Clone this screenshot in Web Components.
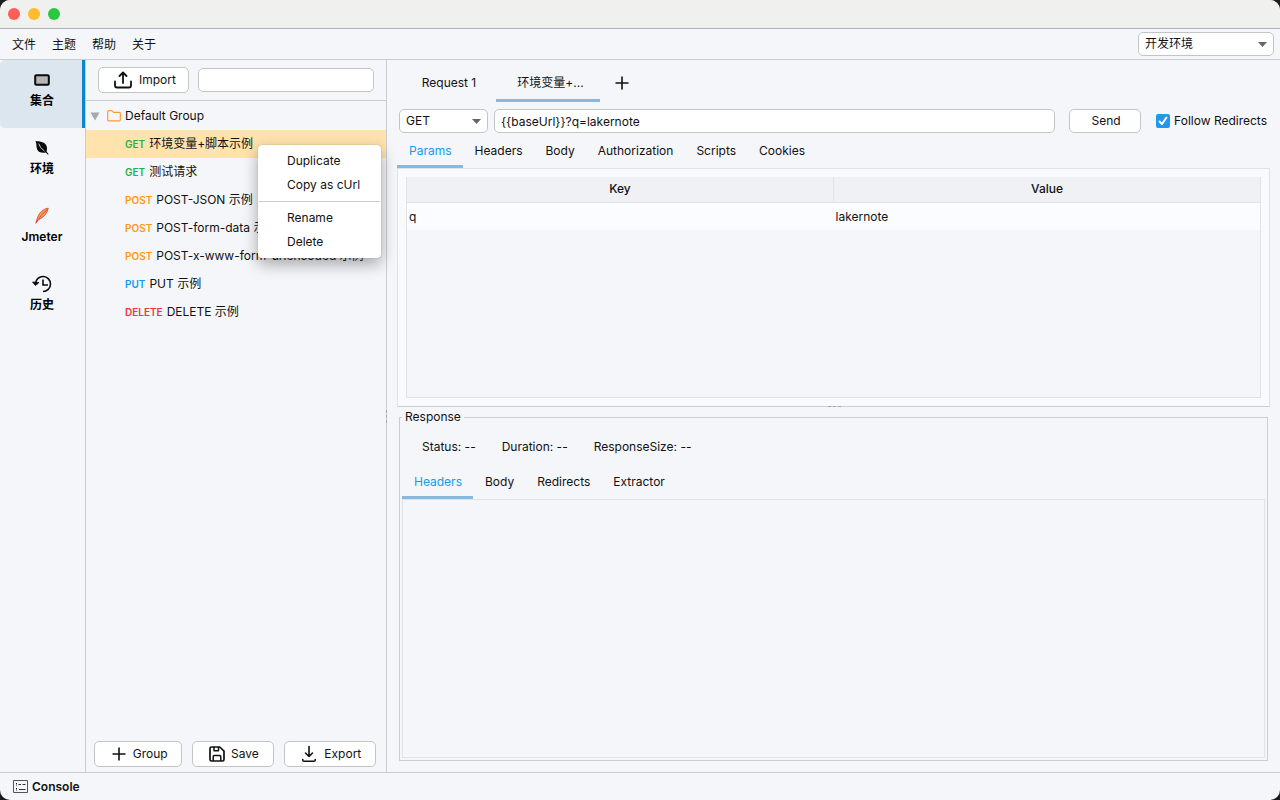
<!DOCTYPE html>
<html lang="zh-CN">
<head>
<meta charset="utf-8">
<title>API Client</title>
<style>
  :root {
    --bg: #f5f6fa;
    --line: #cccdd0;
    --control: #c4c4c4;
    --pane: #e0e2e8;
    --accent: #129bf4;
    --underline: #87b9e0;
  }

  html {
    background: #1c1c20;
  }

  body {
    margin: 0;
    color: #111;
    font: 12px/16px Inter, "Noto Sans CJK SC", sans-serif;
  }
</style>
</head>
<body>
<app-window></app-window>

<script>
const icons = {
  import: '<svg width="20" height="20" viewBox="0 0 20 20" fill="none" stroke="#111" stroke-width="1.8" stroke-linecap="round" stroke-linejoin="round"><path d="M10 13V3M6.500 6 10 2.500 13.500 6M2 11.500v4q0 2 2 2h12q2 0 2-2v-4"/></svg>',
  export: '<svg width="18" height="18" viewBox="0 0 18 18" fill="none" stroke="#111" stroke-width="1.600" stroke-linecap="round" stroke-linejoin="round"><path d="M9 1.500v10M5.500 8 9 11.500 12.500 8M2.800 14.500v.5q0 1.300 1.300 1.300h9.800q1.300 0 1.300-1.300v-.5"/></svg>',
  plus: '<svg width="16" height="16" viewBox="0 0 16 16" stroke="#111" stroke-width="1.600"><path d="M8 1.500v13M1.500 8h13"/></svg>',
  save: '<svg width="16" height="16" viewBox="0 0 16 16" fill="none" stroke="#111" stroke-width="1.700" stroke-linejoin="round"><path d="M2.500 1h8.300L15 5.200v8.300q0 1.500-1.500 1.500h-11Q1 15 1 13.500v-11Q1 1 2.500 1Z"/><path d="M5 1v3.700h4.500V1M4.200 15v-4.300q0-1.200 1.200-1.200h5.200q1.200 0 1.200 1.200V15" stroke-width="1.500"/></svg>',
  console: '<svg width="15" height="13" viewBox="0 0 15 13" fill="none" stroke="#555"><path d="M.5.5h14v12H.5Z"/><path d="M3.500 3v2.500M3.500 8v2.500" stroke="#111" stroke-dasharray="1 .6"/><path d="M5.500 4.500h2.500M9.500 4.500h3M6 9.500h6.500" stroke="#333"/></svg>',
  collection: '<svg width="16" height="12" viewBox="0 0 16 12"><rect x="1.200" y="1.200" width="13.600" height="9.600" rx="1" fill="#b4b4b4" stroke="#0a0a0a" stroke-width="2"/></svg>',
  leaf: '<svg width="16" height="16" viewBox="0 0 16 16"><path fill="#0a0a0a" d="M1.500 1C6 1.300 11.500 1.800 12.800 6.800c.4 2 .1 3.600-.2 4.700l2 2.800-.6.500-2.200-2.400c-3.600 1-7.300.1-8.600-2.900C1.900 6.500 3 4 1.500 1Z"/><path d="M4.800 3.600q.8 4.400 5.700 7.400" fill="none" stroke="#f5f6fa" stroke-width=".8"/></svg>',
  feather: '<svg width="16" height="18" viewBox="0 0 16 18"><path d="M14.300 1.200C9.500 1.800 5.500 5.200 3.600 10.300L1.800 16.300 4.600 12.600C9.500 10.600 13 6.500 14.300 1.200Z" fill="#f9a04a" stroke="#e2453c" stroke-width=".9"/><path d="M13.500 2.300Q7 7.500 2.300 15" fill="none" stroke="#d8345a" stroke-width=".8"/></svg>',
  history: '<svg width="20" height="18" viewBox="0 0 20 18" fill="none" stroke="#0a0a0a" stroke-width="1.600"><path d="M3.500 8.500A7.500 7.500 0 1 1 11 16.500M11 4.500V10h5"/><path d="m.5 7 3 3.500L7 7.500Z" fill="#0a0a0a" stroke-width=".8" stroke-linejoin="round"/></svg>',
  folder: '<svg width="14" height="12" viewBox="0 0 14 12" fill="none" stroke="#ff9a2e" stroke-width="1.200" stroke-linejoin="round"><path d="M.7 9.800V1.700q0-1 1-1H5l1.500 1.600h5.800q1 0 1 1v6.500q0 1-1 1H1.700q-1 0-1-1Z"/></svg>',
  caret: '<svg width="10" height="9" viewBox="0 0 10 9"><path fill="#a8a8a8" d="M.5.5h9L5 8.500Z"/></svg>',
  arrow: '<svg width="9" height="5" viewBox="0 0 9 5"><path fill="#666" d="M0 0h9L4.500 5Z"/></svg>',
  check: '<svg width="14" height="14" viewBox="0 0 14 14" fill="none" stroke="#fff" stroke-width="2" stroke-linecap="round" stroke-linejoin="round"><path d="m3.500 7.500 2.500 2.500 4.500-6.500"/></svg>',
}

class UiElement extends HTMLElement {
  constructor() {
    super()

    this.attachShadow({ mode: 'open' })
  }

  connectedCallback() {
    this.shadowRoot.innerHTML = this.template()
  }
}

class UiIcon extends UiElement {
  template() {
    return `
      <style>
        :host { display: inline-flex; flex: none; }
      </style>
      ${icons[this.getAttribute('name')]}
    `
  }
}

class UiButton extends UiElement {
  template() {
    return `
      <style>
        :host { display: flex; }

        button {
          flex: 1;
          display: flex;
          align-items: center;
          justify-content: center;
          gap: 6px;
          padding: 0 10px 0 12px;
          border: 1px solid var(--control);
          border-radius: 5px;
          background: #fff;
          color: inherit;
          font: inherit;
        }
      </style>

      <button type="button"><slot></slot></button>
    `
  }
}

class UiSelect extends UiElement {
  template() {
    const value = this.getAttribute('value')

    return `
      <style>
        :host { display: grid; height: 24px; }

        select, ui-icon { grid-area: 1 / 1; }

        select {
          appearance: none;
          box-sizing: border-box;
          width: 100%;
          padding: 0 6px;
          border: 1px solid var(--control);
          border-radius: 5px;
          background: #fff;
          color: inherit;
          font: inherit;
        }

        ui-icon {
          place-self: center end;
          margin-right: 7px;
          pointer-events: none;
        }
      </style>

      <select aria-label="${this.getAttribute('label')}">
        <option>${value}</option>
      </select>
      <ui-icon name="arrow"></ui-icon>
    `
  }
}

class UiInput extends UiElement {
  template() {
    return `
      <style>
        :host { display: block; height: 24px; }

        input {
          box-sizing: border-box;
          width: 100%;
          height: 100%;
          padding: 0 6px;
          border: 1px solid var(--control);
          border-radius: 5px;
          background: #fff;
          color: inherit;
          font: inherit;
        }
      </style>

      <input type="text" aria-label="${this.getAttribute('label')}" value="${this.getAttribute('value') || ''}">
    `
  }
}

class UiCheckbox extends UiElement {
  template() {
    return `
      <style>
        :host { display: block; }

        label { display: flex; align-items: center; gap: 4px; }
        span { display: grid; }
        input, ui-icon { grid-area: 1 / 1; }

        input {
          appearance: none;
          width: 14px;
          height: 14px;
          margin: 0;
          border-radius: 2px;
          background: #2496ec;
        }

        input:not(:checked) + ui-icon { visibility: hidden; }
        ui-icon { pointer-events: none; }
      </style>

      <label>
        <span><input type="checkbox" checked><ui-icon name="check"></ui-icon></span>
        <slot></slot>
      </label>
    `
  }
}

class UiTab extends UiElement {
  template() {
    return `
      <style>
        :host { display: flex; }

        button {
          flex: 1;
          height: 34px;
          padding: 3px 11px 0 12px;
          border: 0;
          border-bottom: 3px solid transparent;
          background: none;
          color: inherit;
          font: inherit;
          white-space: nowrap;
        }

        :host([large]) button { height: 38px; padding-left: 16px; }
        :host([selected]) button { border-color: var(--underline); }
        :host([selected]:not([large])) button { color: var(--accent); }
      </style>

      <button type="button" role="tab" aria-selected="${this.hasAttribute('selected')}"><slot></slot></button>
    `
  }
}

class TitleBar extends UiElement {
  template() {
    return `
      <style>
        :host {
          display: flex;
          align-items: center;
          gap: 8px;
          height: 28px;
          padding-left: 8px;
          border-bottom: 1px solid #b3b3b5;
          background: #f0f0ee;
        }

        button {
          width: 12px;
          height: 12px;
          padding: 0;
          border: 0;
          border-radius: 50%;
        }

        .close { background: #fe5f57; }
        .minimize { background: #febb2e; }
        .zoom { background: #28c840; }
      </style>

      <button class="close" aria-label="Close"></button>
      <button class="minimize" aria-label="Minimize"></button>
      <button class="zoom" aria-label="Zoom"></button>
    `
  }
}

class MenuBar extends UiElement {
  template() {
    return `
      <style>
        :host {
          display: flex;
          align-items: center;
          gap: 16px;
          height: 30px;
          padding: 0 6px 0 12px;
          border-bottom: 1px solid var(--line);
        }

        button {
          padding: 2px 0 0;
          border: 0;
          background: none;
          color: inherit;
          font: inherit;
        }

        ui-select { width: 136px; margin-left: auto; }
      </style>

      <button>文件</button>
      <button>主题</button>
      <button>帮助</button>
      <button>关于</button>
      <ui-select label="环境" value="开发环境"></ui-select>
    `
  }
}

class NavItem extends UiElement {
  template() {
    return `
      <style>
        :host { display: block; }

        button {
          display: flex;
          flex-direction: column;
          align-items: center;
          gap: 3px;
          box-sizing: border-box;
          width: 100%;
          height: 68px;
          padding: 10px 0 9px 2px;
          border: 0;
          border-right: 3px solid transparent;
          border-radius: 5px 0 0 5px;
          background: none;
          color: #000;
          font: inherit;
          font-weight: 600;
        }

        .icon { display: grid; place-items: center; height: 20px; }

        :host([selected]) button {
          border-color: #0c85cc;
          background: #dbe6ee;
        }
      </style>

      <button type="button">
        <span class="icon"><ui-icon name="${this.getAttribute('icon')}"></ui-icon></span>
        <slot></slot>
      </button>
    `
  }
}

class TreeRow extends UiElement {
  template() {
    const method = this.getAttribute('method')

    return `
      <style>
        :host {
          display: flex;
          align-items: center;
          gap: 4px;
          height: 28px;
          padding-left: 39px;
          white-space: nowrap;
        }

        :host([selected]) { background: #ffe3ac; }

        b { font-size: 10px; font-weight: 600; }
        .get { color: #1fb14c; }
        .post { color: #ff9811; }
        .put { color: #129bf4; }
        .delete { color: #f53535; }
      </style>

      <b class="${method.toLowerCase()}">${method}</b>
      <span><slot></slot></span>
    `
  }
}

class ContextMenu extends UiElement {
  template() {
    return `
      <style>
        :host {
          display: block;
          box-sizing: border-box;
          padding: 4px 0;
          border-radius: 4px;
          background: #fff;
          box-shadow: 0 0 1px #0006, 0 6px 16px #0005;
        }

        button {
          display: block;
          width: 100%;
          height: 24px;
          padding: 0 29px;
          border: 0;
          background: none;
          color: inherit;
          font: inherit;
          text-align: left;
          white-space: nowrap;
        }

        hr {
          margin: 4px 1px;
          border: 0;
          border-top: 1px solid #ccc;
        }
      </style>

      <div role="menu">
        <button role="menuitem">Duplicate</button>
        <button role="menuitem">Copy as cUrl</button>
        <hr>
        <button role="menuitem">Rename</button>
        <button role="menuitem">Delete</button>
      </div>
    `
  }
}

// Grip dots drawn over the divider between two panels
class SplitGrip extends UiElement {
  template() {
    return `
      <style>
        :host {
          display: flex;
          gap: 2px;
        }

        :host([vertical]) { flex-direction: column; }

        i {
          width: 3px;
          height: 1px;
          background: #a4a6aa;
        }

        :host([vertical]) i {
          width: 1px;
          height: 3px;
        }
      </style>

      <i></i><i></i><i></i>
    `
  }
}

class CollectionPanel extends UiElement {
  template() {
    return `
      <style>
        :host {
          position: relative;
          display: flex;
          flex-direction: column;
          box-sizing: border-box;
          border-right: 1px solid var(--line);
        }

        .toolbar {
          display: flex;
          align-items: center;
          gap: 9px;
          height: 40px;
          padding: 0 12px;
          border-bottom: 1px solid var(--line);
        }

        .toolbar ui-button { width: 91px; height: 26px; }
        .toolbar ui-input { flex: 1; }

        .tree { flex: 1; padding-top: 1px; }

        .group {
          display: flex;
          align-items: center;
          height: 28px;
          padding-left: 4px;
        }

        .group ui-icon + ui-icon { margin: 0 4px 0 7px; }

        .actions {
          display: flex;
          gap: 10px;
          height: 26px;
          padding: 0 10px 5px 8px;
        }

        .actions ui-button { flex: 1 1 auto; }

        context-menu {
          position: absolute;
          left: 172px;
          top: 85px;
          z-index: 1;
          width: 123px;
        }

        split-grip {
          position: absolute;
          right: -1px;
          top: calc(50% - 6px);
        }
      </style>

      <div class="toolbar">
        <ui-button><ui-icon name="import"></ui-icon>Import</ui-button>
        <ui-input label="Search"></ui-input>
      </div>
      <div class="tree">
        <div class="group">
          <ui-icon name="caret"></ui-icon>
          <ui-icon name="folder"></ui-icon>
          <span>Default Group</span>
        </div>
        <tree-row method="GET" selected>环境变量+脚本示例</tree-row>
        <tree-row method="GET">测试请求</tree-row>
        <tree-row method="POST">POST-JSON 示例</tree-row>
        <tree-row method="POST">POST-form-data 示例</tree-row>
        <tree-row method="POST">POST-x-www-form-urlencoded 示例</tree-row>
        <tree-row method="PUT">PUT 示例</tree-row>
        <tree-row method="DELETE">DELETE 示例</tree-row>
      </div>
      <div class="actions">
        <ui-button><ui-icon name="plus"></ui-icon>Group</ui-button>
        <ui-button><ui-icon name="save"></ui-icon>Save</ui-button>
        <ui-button><ui-icon name="export"></ui-icon>Export</ui-button>
      </div>
      <context-menu></context-menu>
      <split-grip vertical></split-grip>
    `
  }
}

class ParamsTable extends UiElement {
  template() {
    return `
      <style>
        :host {
          display: block;
          box-sizing: border-box;
          border: 1px solid var(--pane);
          border-top: 0;
          background: var(--bg);
        }

        table {
          width: 100%;
          border-collapse: collapse;
          table-layout: fixed;
        }

        th {
          height: 24px;
          padding: 0 0 1px;
          border-bottom: 1px solid var(--pane);
          background: #f0f1f5;
          font-weight: 500;
        }

        th + th { border-left: 1px solid #e2e3e7; }

        td {
          height: 27px;
          padding: 0 2px;
          background: #fbfcff;
        }
      </style>

      <table>
        <thead><tr><th>Key</th><th>Value</th></tr></thead>
        <tbody><tr><td>q</td><td>lakernote</td></tr></tbody>
      </table>
    `
  }
}

class RequestEditor extends UiElement {
  template() {
    return `
      <style>
        :host {
          position: relative;
          display: flex;
          flex-direction: column;
        }

        .url {
          display: flex;
          align-items: center;
          padding: 7px 3px 1px 2px;
        }

        .url ui-select { width: 89px; margin-right: 6px; }
        .url ui-input { flex: 1; margin-right: 14px; }
        .url ui-button { width: 72px; height: 24px; margin-right: 15px; }

        .tabs { display: flex; }

        .pane {
          flex: 1;
          display: flex;
          padding: 8px;
          border: 1px solid var(--pane);
          border-bottom-color: var(--line);
          background: #f9fafc;
        }

        params-table { flex: 1; }

        split-grip {
          position: absolute;
          bottom: 0;
          left: calc(50% - 6px);
        }
      </style>

      <div class="url">
        <ui-select label="Method" value="GET"></ui-select>
        <ui-input label="URL" value="{{baseUrl}}?q=lakernote"></ui-input>
        <ui-button>Send</ui-button>
        <ui-checkbox>Follow Redirects</ui-checkbox>
      </div>
      <div class="tabs" role="tablist">
        <ui-tab selected>Params</ui-tab>
        <ui-tab>Headers</ui-tab>
        <ui-tab>Body</ui-tab>
        <ui-tab>Authorization</ui-tab>
        <ui-tab>Scripts</ui-tab>
        <ui-tab>Cookies</ui-tab>
      </div>
      <div class="pane"><params-table></params-table></div>
      <split-grip></split-grip>
    `
  }
}

class ResponseViewer extends UiElement {
  template() {
    return `
      <style>
        :host { display: flex; }

        fieldset {
          flex: 1;
          display: flex;
          flex-direction: column;
          min-width: 0;
          margin: 0 2px;
          padding: 14px 2px 2px;
          border: 1px solid var(--line);
        }

        legend { padding: 0 3px; }

        .stats {
          display: flex;
          gap: 26px;
          padding: 0 20px 10px;
        }

        .tabs { display: flex; }
        .pane { flex: 1; border: 1px solid var(--pane); }
      </style>

      <fieldset>
        <legend>Response</legend>
        <div class="stats">
          <span>Status: --</span>
          <span>Duration: --</span>
          <span>ResponseSize: --</span>
        </div>
        <div class="tabs" role="tablist">
          <ui-tab selected>Headers</ui-tab>
          <ui-tab>Body</ui-tab>
          <ui-tab>Redirects</ui-tab>
          <ui-tab>Extractor</ui-tab>
        </div>
        <div class="pane"></div>
      </fieldset>
    `
  }
}

class RequestWorkspace extends UiElement {
  template() {
    return `
      <style>
        :host {
          display: flex;
          flex-direction: column;
          padding: 4px 10px 11px;
        }

        .tabs { display: flex; align-items: center; }
        .tabs ui-tab { width: 104px; }
        .tabs ui-tab:first-child { width: 99px; }

        .add {
          display: flex;
          padding: 0 14px;
          border: 0;
          background: none;
        }

        request-editor { flex: 305 1 0; }
        response-viewer { flex: 352 1 0; margin-top: 2px; }
      </style>

      <div class="tabs" role="tablist">
        <ui-tab large>Request 1</ui-tab>
        <ui-tab large selected>环境变量+...</ui-tab>
        <button class="add" aria-label="New request"><ui-icon name="plus"></ui-icon></button>
      </div>
      <request-editor></request-editor>
      <response-viewer></response-viewer>
    `
  }
}

class StatusBar extends UiElement {
  template() {
    return `
      <style>
        :host {
          display: flex;
          height: 27px;
          padding-left: 13px;
          border-top: 1px solid var(--line);
        }

        button {
          display: flex;
          align-items: center;
          gap: 4px;
          padding: 0;
          border: 0;
          background: none;
          color: inherit;
          font: inherit;
          font-weight: 600;
        }
      </style>

      <button type="button"><ui-icon name="console"></ui-icon>Console</button>
    `
  }
}

class AppWindow extends UiElement {
  template() {
    return `
      <style>
        :host {
          display: flex;
          flex-direction: column;
          min-height: 100vh;
          overflow: hidden;
          border-radius: 10px;
          background: var(--bg);
        }

        .body {
          flex: 1;
          display: grid;
          grid-template-columns: 86px 301px minmax(0, 1fr);
        }

        nav { border-right: 1px solid var(--line); }
      </style>

      <title-bar></title-bar>
      <menu-bar></menu-bar>
      <div class="body">
        <nav>
          <nav-item icon="collection" selected>集合</nav-item>
          <nav-item icon="leaf">环境</nav-item>
          <nav-item icon="feather">Jmeter</nav-item>
          <nav-item icon="history">历史</nav-item>
        </nav>
        <collection-panel></collection-panel>
        <request-workspace></request-workspace>
      </div>
      <status-bar></status-bar>
    `
  }
}

customElements.define('ui-icon', UiIcon)
customElements.define('ui-button', UiButton)
customElements.define('ui-select', UiSelect)
customElements.define('ui-input', UiInput)
customElements.define('ui-checkbox', UiCheckbox)
customElements.define('ui-tab', UiTab)
customElements.define('split-grip', SplitGrip)
customElements.define('title-bar', TitleBar)
customElements.define('menu-bar', MenuBar)
customElements.define('nav-item', NavItem)
customElements.define('tree-row', TreeRow)
customElements.define('context-menu', ContextMenu)
customElements.define('collection-panel', CollectionPanel)
customElements.define('params-table', ParamsTable)
customElements.define('request-editor', RequestEditor)
customElements.define('response-viewer', ResponseViewer)
customElements.define('request-workspace', RequestWorkspace)
customElements.define('status-bar', StatusBar)
customElements.define('app-window', AppWindow)
</script>
</body>
</html>
